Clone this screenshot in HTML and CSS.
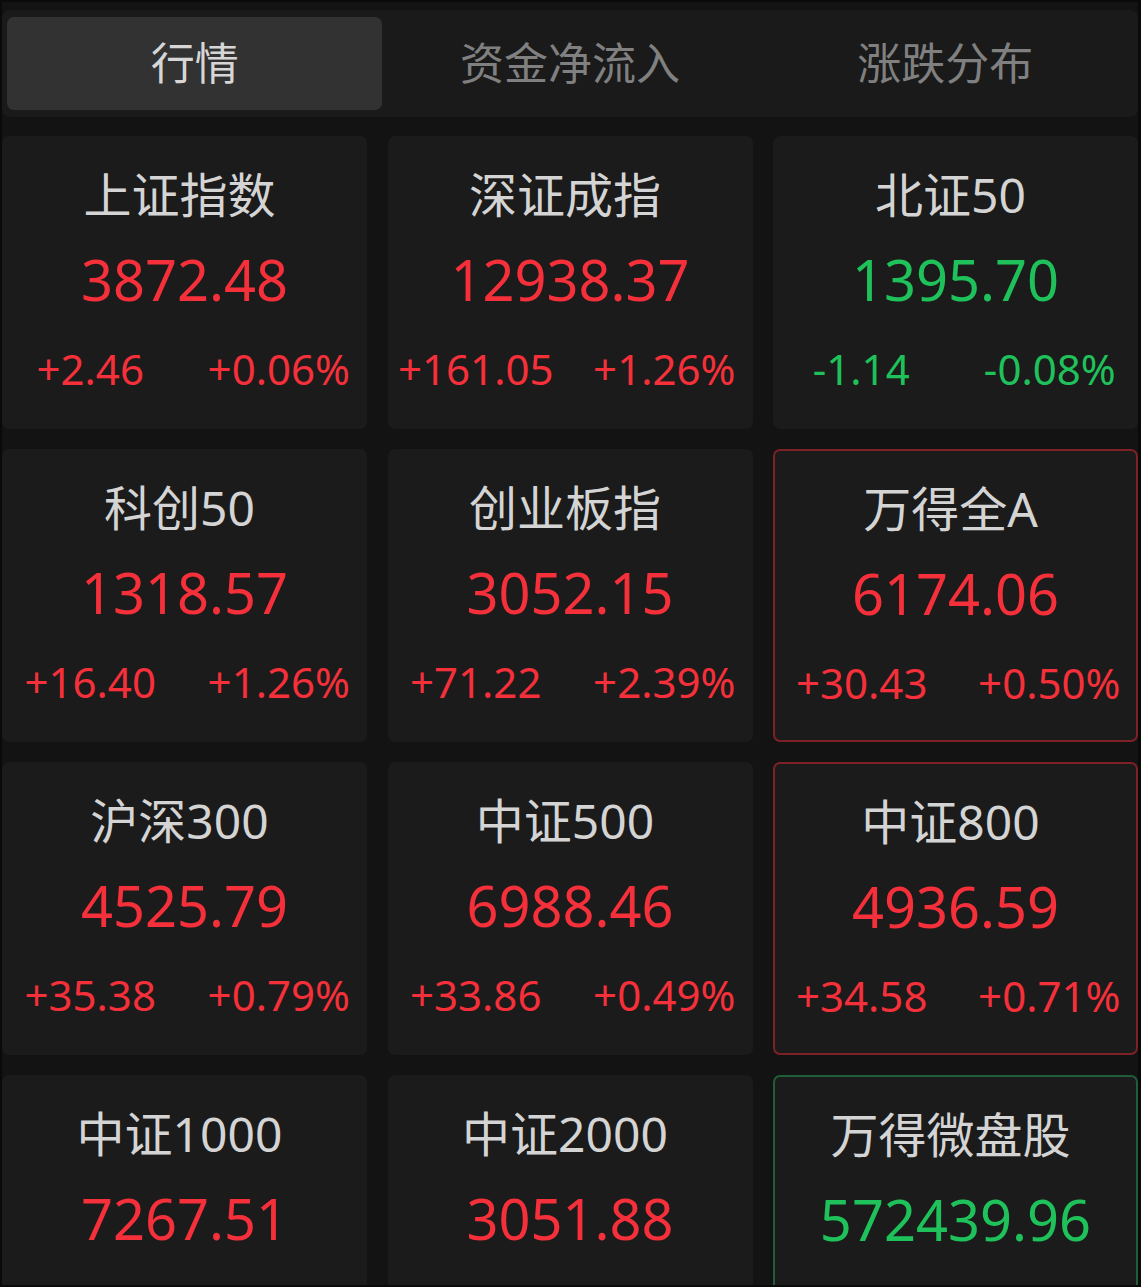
FILE: index.html
```html
<!DOCTYPE html>
<html lang="zh-CN">
<head>
<meta charset="utf-8">
<title>行情</title>
<link rel="stylesheet" href="styles.css">
</head>
<body>
<div class="screen">
  <div class="tabs">
    <div class="tab active">行情</div>
    <div class="tab">资金净流入</div>
    <div class="tab">涨跌分布</div>
  </div>
  <div class="grid">
    <div class="card">
      <div class="name">上证指数</div>
      <div class="value up">3872.48</div>
      <div class="changes up"><span>+2.46</span><span>+0.06%</span></div>
    </div>
    <div class="card">
      <div class="name">深证成指</div>
      <div class="value up">12938.37</div>
      <div class="changes up"><span>+161.05</span><span>+1.26%</span></div>
    </div>
    <div class="card">
      <div class="name">北证50</div>
      <div class="value down">1395.70</div>
      <div class="changes down"><span>-1.14</span><span>-0.08%</span></div>
    </div>

    <div class="card">
      <div class="name">科创50</div>
      <div class="value up">1318.57</div>
      <div class="changes up"><span>+16.40</span><span>+1.26%</span></div>
    </div>
    <div class="card">
      <div class="name">创业板指</div>
      <div class="value up">3052.15</div>
      <div class="changes up"><span>+71.22</span><span>+2.39%</span></div>
    </div>
    <div class="card card-up">
      <div class="name">万得全A</div>
      <div class="value up">6174.06</div>
      <div class="changes up"><span>+30.43</span><span>+0.50%</span></div>
    </div>

    <div class="card">
      <div class="name">沪深300</div>
      <div class="value up">4525.79</div>
      <div class="changes up"><span>+35.38</span><span>+0.79%</span></div>
    </div>
    <div class="card">
      <div class="name">中证500</div>
      <div class="value up">6988.46</div>
      <div class="changes up"><span>+33.86</span><span>+0.49%</span></div>
    </div>
    <div class="card card-up">
      <div class="name">中证800</div>
      <div class="value up">4936.59</div>
      <div class="changes up"><span>+34.58</span><span>+0.71%</span></div>
    </div>

    <div class="card">
      <div class="name">中证1000</div>
      <div class="value up">7267.51</div>
    </div>
    <div class="card">
      <div class="name">中证2000</div>
      <div class="value up">3051.88</div>
    </div>
    <div class="card card-down">
      <div class="name">万得微盘股</div>
      <div class="value down">572439.96</div>
    </div>
  </div>
</div>
</body>
</html>
```

FILE: styles.css
```css
html, body {
  margin: 0;
  padding: 0;
  background: #0a0a0a;
}

body {
  font-family: "Noto Sans", "Noto Sans CJK SC", sans-serif;
}

.screen {
  margin: 2px 3px 0 2px;
  height: 1283px;
  background: #131313;
  overflow: hidden;
  padding-top: 8px;
  box-sizing: border-box;
}

.tabs {
  display: grid;
  grid-template-columns: repeat(3, 1fr);
  height: 107px;
  box-sizing: border-box;
  padding: 7px 5px;
  background: #1a1a1a;
  border-radius: 8px;
}

.tab {
  display: flex;
  align-items: center;
  justify-content: center;
  font-size: 44px;
  color: #808080;
  border-radius: 7px;
  padding-bottom: 6px;
}

.tab.active {
  background: #323232;
  color: #d6d6d6;
}

.grid {
  margin-top: 19px;
  display: grid;
  grid-template-columns: repeat(3, 1fr);
  grid-auto-rows: 293px;
  column-gap: 20.5px;
  row-gap: 20px;
}

.card {
  background: #1b1b1b;
  border-radius: 7px;
  display: flex;
  flex-direction: column;
  align-items: center;
  box-sizing: border-box;
  border: 1.5px solid transparent;
}

.card-up {
  border: 2px solid #7d2127;
}

.card-down {
  border: 2px solid #1f5e38;
}

.name {
  margin-top: 28px;
  padding-right: 10px;
  font-size: 48px;
  line-height: 60px;
  color: #d4d4d4;
}

.value {
  margin-top: 19px;
  font-size: 56px;
  line-height: 70px;
}

.changes {
  margin-top: 30px;
  width: calc(100% + 14px);
  display: grid;
  grid-template-columns: 1fr 1fr;
  font-size: 42px;
  line-height: 50px;
  text-align: center;
}

.up {
  color: #f5303a;
}

.down {
  color: #1fc25a;
}
```
